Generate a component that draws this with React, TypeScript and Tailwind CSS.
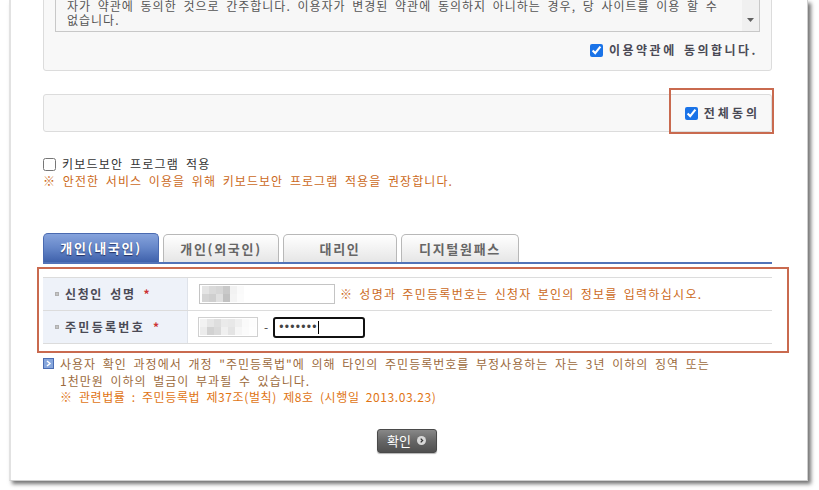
import React from 'react';

const FONT = "font-['Noto_Sans_CJK_KR','Liberation_Sans',sans-serif]";

const tabs = [
    { label: '개인(내국인)', w: 'w-[116px]', active: true },
    { label: '개인(외국인)', w: 'w-[116px]', active: false },
    { label: '대리인', w: 'w-[114px]', active: false },
    { label: '디지털원패스', w: 'w-[118px]', active: false },
];

// blurred (mosaic) value inside the masked inputs
const Mosaic: React.FC<{ cells: string[]; cols: number }> = ({ cells, cols }) => (
    <div className="grid gap-0" style={{ gridTemplateColumns: `repeat(${cols}, 7px)` }}>
        {cells.map((c, i) => (
            <div key={i} className="h-[8px]" style={{ background: c }} />
        ))}
    </div>
);

const Check: React.FC<{ checked?: boolean }> = ({ checked }) => (
    <input
        type="checkbox"
        defaultChecked={checked}
        className="w-[13px] h-[13px] m-0 accent-[#1a73e8] shrink-0"
    />
);

const Label: React.FC<{ text: string; track: string }> = ({ text, track }) => (
    <div className="w-[145px] h-full bg-[#eef2f9] border-r border-[#dfe3ea] flex items-center pl-[12px] gap-[6px]">
        <div className="w-[4px] h-[4px] bg-[#c4c4c4] border border-[#b0b0b0]" />
        <span className={`text-[12px] font-bold text-[#4a4a55] [word-spacing:3px] ${track}`}>{text}</span>
        <span className="text-[12px] font-bold text-[#cc3333] ml-[2px]">*</span>
    </div>
);

export default function App() {
    return (
        <div className={`w-[819px] h-[490px] bg-white overflow-hidden ${FONT}`}>
            <div className="ml-[9px] w-[799px] h-[481px] bg-white border-l-2 border-r border-b border-l-[#e2e2e2] border-r-[#cfcfcf] border-b-[#cfcfcf] shadow-[3px_3px_4px_rgba(0,0,0,0.55)] pl-[32px] pr-[35px] overflow-hidden">
                {/* Terms panel */}
                <div className="-mt-[40px] border border-[#dcdcdc] rounded-[3px] bg-[#f8f8f8] px-[11px] pt-[11px] pb-[13px]">
                    <div className="h-[60px] border border-[#c8c8c8] bg-[#f7f7f7] flex overflow-hidden">
                        <div className="flex-1 flex flex-col justify-end pl-[11px] pb-[4px] text-[12px] leading-[14px] text-[#555] tracking-[1px] [word-spacing:3px]">
                            <div className="whitespace-nowrap">자가 약관에 동의한 것으로 간주합니다. 이용자가 변경된 약관에 동의하지 아니하는 경우, 당 사이트를 이용 할 수</div>
                            <div>없습니다.</div>
                        </div>
                        <div className="w-[17px] bg-[#f0f0f0] flex flex-col justify-end items-center pb-[9px]">
                            <svg width="7" height="4" viewBox="0 0 7 4">
                                <path d="M0 0h7L3.5 4z" fill="#606060" />
                            </svg>
                        </div>
                    </div>
                    <div className="mt-[11px] h-[14px] flex items-center justify-end gap-[6px] pr-[2px]">
                        <Check checked />
                        <span className="text-[12px] font-bold tracking-[2.5px] text-[#4a4a55] [word-spacing:2px]">이용약관에 동의합니다.</span>
                    </div>
                </div>

                {/* Agree all */}
                <div className="mt-[23px] h-[38px] border border-[#dcdcdc] rounded-[3px] bg-[#f8f8f8] flex items-center justify-end pr-[11px] relative">
                    <div className="flex items-center gap-[6px]">
                        <Check checked />
                        <span className="text-[12px] font-bold tracking-[3px] text-[#4a4a55]">전체동의</span>
                    </div>
                    <div className="absolute right-[-3px] top-[-7px] w-[105px] h-[46px] border-2 border-[#c96a4f] pointer-events-none" />
                </div>

                {/* Keyboard security */}
                <div className="mt-[25px] h-[14px] flex items-center gap-[6px]">
                    <Check />
                    <span className="text-[12px] text-[#333] tracking-[1.2px] [word-spacing:3px]">키보드보안 프로그램 적용</span>
                </div>
                <div className="mt-[2px] text-[12px] leading-[16px] text-[#cc6a1c] tracking-[1.05px] [word-spacing:3px]">
                    ※ 안전한 서비스 이용을 위해 키보드보안 프로그램 적용을 권장합니다.
                </div>

                {/* Tabs */}
                <div className="mt-[44px] h-[29px] flex items-end gap-[4px]">
                    {tabs.map(t => (
                        <div
                            key={t.label}
                            className={
                                t.active
                                    ? `${t.w} h-[29px] rounded-t-[5px] border border-b-0 border-[#4a6ab0] bg-gradient-to-b from-[#86a3dc] via-[#6586c8] to-[#3f61ab] flex items-center justify-center text-[13px] font-bold tracking-[1.7px] text-white [text-shadow:0_1px_1px_rgba(0,0,40,0.6)]`
                                    : `${t.w} h-[28px] rounded-t-[5px] border border-b-0 border-[#b8b8b8] bg-gradient-to-b from-white to-[#e6e6e6] flex items-center justify-center text-[13px] font-bold tracking-[1.7px] text-[#666]`
                            }
                        >
                            {t.label}
                        </div>
                    ))}
                </div>
                <div className="h-[2px] bg-[#5173b8]" />

                {/* Applicant table */}
                <div className="mt-[13px] relative">
                    <div className="border-t border-[#dcdcdc]">
                        <div className="h-[33px] border-b border-[#dcdcdc] flex items-center">
                            <Label text="신청인 성명" track="tracking-[1.6px]" />
                            <div className="flex items-center pl-[11px]">
                                <div className="w-[136px] h-[20px] border border-[#c4c4c4] bg-white pl-[2px] pt-[1px]">
                                    <Mosaic cols={6} cells={['#e4e4e4', '#dadada', '#d6d6d6', '#c9c9c9', '#f2f2f2', '#fafafa', '#d4d4d4', '#cfcfcf', '#e0e0e0', '#c2c2c2', '#f4f4f4', '#fbfbfb']} />
                                </div>
                                <span className="ml-[5px] text-[12px] text-[#cc6a1c] tracking-[1.3px] [word-spacing:2px] whitespace-nowrap">
                                    ※ 성명과 주민등록번호는 신청자 본인의 정보를 입력하십시오.
                                </span>
                            </div>
                        </div>
                        <div className="h-[33px] border-b border-[#dcdcdc] flex items-center">
                            <Label text="주민등록번호" track="tracking-[2.3px]" />
                            <div className="flex items-center pl-[10px]">
                                <div className="w-[60px] h-[20px] border border-[#d0d0d0] bg-white pl-[1px] pt-[1px]">
                                    <Mosaic cols={8} cells={['#f2f2f2', '#e6e6e6', '#dedede', '#eaeaea', '#e8e8e8', '#f0f0f0', '#fafafa', '#fdfdfd', '#ececec', '#d2d2d2', '#dadada', '#f0f0f0', '#e4e4e4', '#f6f6f6', '#fbfbfb', '#fefefe']} />
                                </div>
                                <span className="ml-[6px] text-[12px] text-[#444]">-</span>
                                <div className="ml-[5px] w-[92px] h-[21px] border-2 border-[#111] rounded-[3px] bg-white flex items-center pl-[4px]">
                                    <span className="font-['Liberation_Sans',sans-serif] text-[12px] tracking-[1.3px] text-[#444] leading-none">•••••••</span>
                                    <span className="w-px h-[13px] bg-black" />
                                </div>
                            </div>
                        </div>
                    </div>
                    <div className="absolute left-[-6px] right-[-17px] top-[-10px] bottom-[-9px] border-2 border-[#c96a4f] pointer-events-none" />
                </div>

                {/* Notice */}
                <div className="mt-[12px] flex gap-[6px] text-[12px] leading-[16.5px] [word-spacing:3px]">
                    <svg width="11" height="11" viewBox="0 0 11 11" className="mt-[2px] shrink-0">
                        <rect x="0.5" y="0.5" width="10" height="10" fill="#86a6dc" stroke="#4b6db3" />
                        <path d="M4 3l3 2.5L4 8" fill="none" stroke="#fff" strokeWidth="1.5" />
                    </svg>
                    <div className="whitespace-nowrap">
                        <div className="text-[#9c6a3c] tracking-[1px]">사용자 확인 과정에서 개정 "주민등록법"에 의해 타인의 주민등록번호를 부정사용하는 자는 3년 이하의 징역 또는</div>
                        <div className="text-[#9c6a3c] tracking-[1px]">1천만원 이하의 벌금이 부과될 수 있습니다.</div>
                        <div className="text-[#e07414] tracking-[0.6px] [word-spacing:3px]">※ 관련법률 : 주민등록법 제37조(벌칙) 제8호 (시행일 2013.03.23)</div>
                    </div>
                </div>

                {/* Confirm */}
                <div className="mt-[23px] flex justify-center pr-[2px]">
                    <button className="w-[60px] h-[24px] rounded-[3px] border border-[#4a4a4a] bg-gradient-to-b from-[#888] via-[#666] to-[#505050] flex items-center justify-center gap-[6px] text-[13px] text-white shadow-[0_1px_1px_rgba(0,0,0,0.3)]">
                        <span>확인</span>
                        <svg width="9" height="9" viewBox="0 0 9 9">
                            <circle cx="4.5" cy="4.5" r="4.5" fill="#d8d8d8" />
                            <path d="M3.7 2.6l1.9 1.9-1.9 1.9" fill="none" stroke="#333" strokeWidth="1.3" />
                        </svg>
                    </button>
                </div>
            </div>
        </div>
    );
}
